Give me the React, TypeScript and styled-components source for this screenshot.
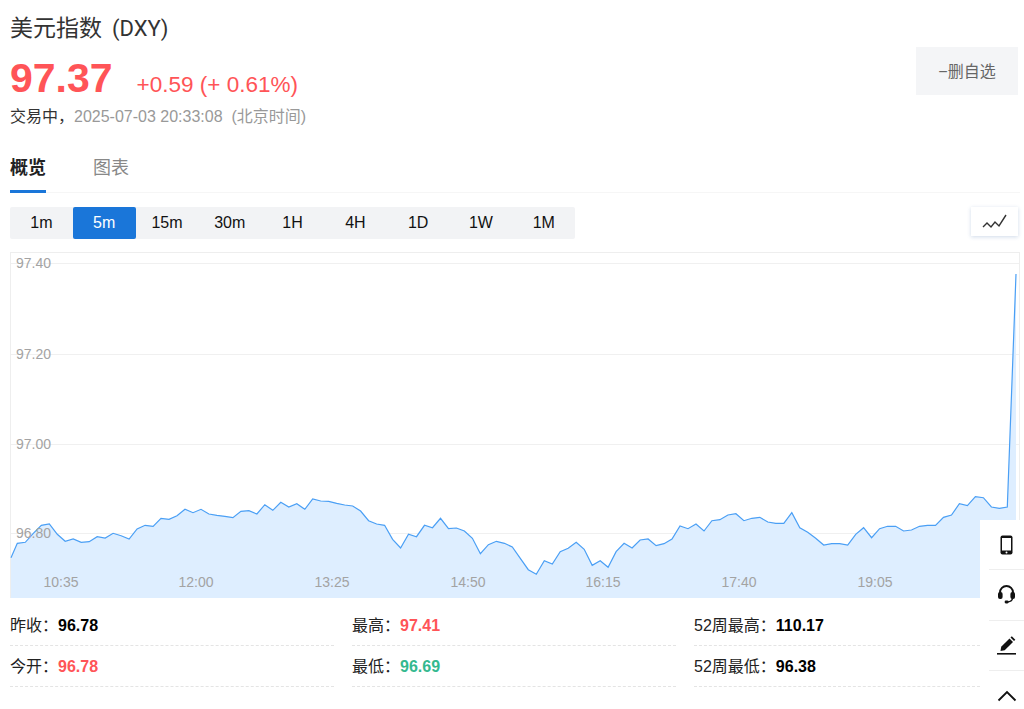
import React from 'react';
import styled, { createGlobalStyle } from 'styled-components';

const RED = '#ff5457';
const GREEN = '#34b98f';
const BLUE = '#1a76d9';

const GlobalStyle = createGlobalStyle`
  html, body {
    margin: 0;
    padding: 0;
    background: #fff;
    overflow: hidden;
  }
  body {
    font-family: "Liberation Sans", "Noto Sans CJK SC", sans-serif;
    color: #000;
  }
`;

// line in thirds of a pixel below y=480, measured off the chart
const LINE = [
  233, 190, 187, 160, 136, 132, 163, 184, 177, 187, 185, 170, 174, 160, 167, 177, 147, 136, 139, 115,
  118, 107, 88, 98, 88, 102, 106, 109, 113, 94, 92, 102, 74, 91, 67, 81, 71, 88, 57, 63,
  64, 70, 75, 78, 93, 122, 132, 136, 178, 204, 163, 170, 136, 143, 115, 146, 144, 153, 175, 221,
  194, 184, 190, 201, 235, 269, 283, 242, 252, 215, 205, 187, 208, 256, 242, 262, 215, 190, 204, 180,
  177, 197, 191, 177, 138, 146, 132, 153, 122, 119, 105, 101, 122, 115, 112, 126, 130, 130, 98, 143,
  157, 175, 195, 191, 191, 195, 163, 143, 173, 146, 139, 139, 153, 150, 139, 136, 136, 112, 105, 71,
  77, 50, 53, 81, 85, 81,
];

const points = LINE.map((v, i) => {
  const x = i === 0 ? 11 : 17.33 + (i - 1) * 7.984;
  return `${x.toFixed(1)},${(480 + v / 3).toFixed(1)}`;
});
points.push('1016,274');
const linePath = points.join(' ');
const areaPath = `11,598 ${linePath} 1016,598`;

const PERIODS = ['1m', '5m', '15m', '30m', '1H', '4H', '1D', '1W', '1M'];
const Y_LABELS = [
  { label: '97.40', y: 263 },
  { label: '97.20', y: 354 },
  { label: '97.00', y: 444 },
  { label: '96.80', y: 533 },
];
const X_LABELS = [
  { label: '10:35', x: 61 },
  { label: '12:00', x: 196 },
  { label: '13:25', x: 332 },
  { label: '14:50', x: 468 },
  { label: '16:15', x: 603 },
  { label: '17:40', x: 739 },
  { label: '19:05', x: 875 },
];
const STATS = [
  [
    { name: '昨收', value: '96.78' },
    { name: '今开', value: '96.78', color: RED },
  ],
  [
    { name: '最高', value: '97.41', color: RED },
    { name: '最低', value: '96.69', color: GREEN },
  ],
  [
    { name: '52周最高', value: '110.17' },
    { name: '52周最低', value: '96.38' },
  ],
];

export default function App() {
  return (
    <Page>
      <GlobalStyle />
      <Header>
        <div>
          <Title>
            美元指数<Symbol>(DXY)</Symbol>
          </Title>
          <PriceRow>
            <Price>97.37</Price>
            <Change>+0.59 (+ 0.61%)</Change>
          </PriceRow>
          <Status>
            交易中，<StatusTime>2025-07-03 20:33:08&nbsp;&nbsp;(北京时间)</StatusTime>
          </Status>
        </div>
        <WatchButton>−删自选</WatchButton>
      </Header>

      <Tabs>
        <Tab $active>概览</Tab>
        <Tab>图表</Tab>
      </Tabs>

      <Toolbar>
        <Periods>
          {PERIODS.map((p) => (
            <Period key={p} $active={p === '5m'}>
              {p}
            </Period>
          ))}
        </Periods>
        <ChartToggle>
          <svg width="26" height="18" viewBox="0 0 26 18" fill="none" stroke="#333" strokeWidth="1.4">
            <polyline points="1,14 5,10 9,14 13,9 17,13 24,2" />
          </svg>
        </ChartToggle>
      </Toolbar>

      <ChartBox>
        <svg width="1010" height="346" viewBox="10 252 1010 346" style={{ display: 'block' }}>
          {Y_LABELS.map((l) => (
            <line key={l.y} x1="11" x2="1019" y1={l.y + 0.5} y2={l.y + 0.5} stroke="#f0f0f0" />
          ))}
          <polygon points={areaPath} fill="#deeeff" />
          <polyline points={linePath} fill="none" stroke="#4a9ff5" strokeWidth="1.2" />
          {Y_LABELS.map((l) => (
            <AxisText key={l.label} x="16" y={l.y + 5}>
              {l.label}
            </AxisText>
          ))}
          {X_LABELS.map((l) => (
            <AxisText key={l.label} x={l.x} y="587" textAnchor="middle">
              {l.label}
            </AxisText>
          ))}
        </svg>
      </ChartBox>

      <Stats>
        {STATS.map((col, i) => (
          <StatColumn key={i}>
            {col.map((s) => (
              <StatRow key={s.name}>
                {s.name}：<StatValue $color={s.color}>{s.value}</StatValue>
              </StatRow>
            ))}
          </StatColumn>
        ))}
      </Stats>

      <SideBar>
        <SideItem>
          <svg width="13" height="20" viewBox="0 0 13 20">
            <rect x="0.5" y="0.5" width="12" height="19" rx="2" fill="#111" />
            <rect x="2" y="3" width="9" height="12.5" fill="#fff" />
            <circle cx="6.5" cy="17.5" r="1" fill="#fff" />
          </svg>
        </SideItem>
        <SideItem>
          <svg width="17" height="19" viewBox="0 0 17 19" fill="none">
            <path d="M2 10V7.5a6.5 6.5 0 0 1 13 0V10" stroke="#111" strokeWidth="2" />
            <rect x="0" y="7" width="4.6" height="7" rx="2" fill="#111" />
            <rect x="12.4" y="7" width="4.6" height="7" rx="2" fill="#111" />
            <path d="M14.5 13c0 2.5-2 3.6-5 4" stroke="#111" strokeWidth="1.4" />
            <rect x="6.6" y="15.6" width="4" height="2.8" rx="1.3" fill="#111" />
          </svg>
        </SideItem>
        <SideItem>
          <svg width="20" height="19" viewBox="0 0 20 19">
            <path d="M3.5 15 4.2 10.8 12.5 2.5 16 6 7.7 14.3Z" fill="#111" />
            <path d="M13.5 1.5 14.8 0.2 18.3 3.7 17 5Z" fill="#111" />
            <rect x="0" y="17" width="19" height="1.6" fill="#111" />
          </svg>
        </SideItem>
        <SideItem>
          <svg width="20" height="12" viewBox="0 0 20 12" fill="none" stroke="#111" strokeWidth="1.8">
            <polyline points="1.5,10.5 10,2 18.5,10.5" />
          </svg>
        </SideItem>
      </SideBar>
    </Page>
  );
}

const Page = styled.div`
  position: relative;
  width: 1024px;
  height: 709px;
  overflow: hidden;
`;

const Header = styled.header`
  display: flex;
  justify-content: space-between;
  align-items: flex-start;
  padding: 14px 6px 0 10px;
`;

const Title = styled.h1`
  margin: 0;
  font-size: 23px;
  font-weight: 400;
  line-height: 28px;
  color: #333;
`;

const Symbol = styled.span`
  margin-left: 10px;
  font-family: Roboto, sans-serif;
  font-size: 22px;
`;

const PriceRow = styled.div`
  display: flex;
  align-items: baseline;
  margin-top: 11px;
  color: ${RED};
`;

const Price = styled.span`
  font-size: 41px;
  font-weight: 700;
  line-height: 48px;
`;

const Change = styled.span`
  margin-left: 24px;
  font-size: 22.5px;
`;

const Status = styled.div`
  margin-top: 5px;
  font-size: 16px;
  line-height: 20px;
  color: #333;
`;

const StatusTime = styled.span`
  color: #999;
`;

const WatchButton = styled.button`
  width: 102px;
  height: 48px;
  margin-top: 33px;
  border: 0;
  background: #f4f5f7;
  font: inherit;
  font-size: 16px;
  color: #666;
  padding: 0 0 2px;
`;

const Tabs = styled.nav`
  display: flex;
  gap: 47px;
  margin: 29px 4px 0 10px;
  border-bottom: 1px solid #f6f6f6;
`;

const Tab = styled.a<{ $active?: boolean }>`
  padding-bottom: 10px;
  font-size: 18px;
  line-height: 24px;
  font-weight: ${(p) => (p.$active ? 700 : 400)};
  color: ${(p) => (p.$active ? '#222' : '#888')};
  border-bottom: 3px solid ${(p) => (p.$active ? BLUE : 'transparent')};
  margin-bottom: -1px;
`;

const Toolbar = styled.div`
  display: flex;
  justify-content: space-between;
  align-items: flex-start;
  margin: 14px 6px 0 10px;
`;

const Periods = styled.div`
  display: flex;
  background: #f2f3f5;
  border-radius: 2px;
`;

const Period = styled.div<{ $active?: boolean }>`
  width: 62.8px;
  height: 32px;
  line-height: 32px;
  text-align: center;
  font-size: 16px;
  border-radius: 2px;
  color: ${(p) => (p.$active ? '#fff' : '#111')};
  background: ${(p) => (p.$active ? BLUE : 'transparent')};
`;

const ChartToggle = styled.div`
  display: flex;
  align-items: center;
  justify-content: center;
  width: 47px;
  height: 29px;
  background: #fff;
  box-shadow: 0 1px 4px rgba(40, 90, 160, 0.22);
`;

const ChartBox = styled.div`
  width: 1010px;
  height: 346px;
  margin: 13px 0 0 10px;
  box-shadow: inset 0 0 0 1px #eee;
`;

const AxisText = styled.text`
  font-size: 14px;
  fill: #a3a3a3;
`;

const Stats = styled.section`
  display: grid;
  grid-template-columns: 324px 324px 286px;
  column-gap: 18px;
  margin: 7px 0 0 10px;
`;

const StatColumn = styled.div`
  display: flex;
  flex-direction: column;
`;

const StatRow = styled.div`
  height: 40px;
  line-height: 41px;
  font-size: 16px;
  color: #222;
  border-bottom: 1px dashed #e4e4e4;
`;

const StatValue = styled.b<{ $color?: string }>`
  color: ${(p) => p.$color || '#000'};
`;

const SideBar = styled.aside`
  position: absolute;
  top: 520px;
  right: 0;
  width: 44px;
  height: 189px;
  background: #fff;
  padding-left: 9px;
  box-sizing: border-box;
`;

const SideItem = styled.div`
  display: flex;
  align-items: center;
  justify-content: center;
  height: 50.3px;
  box-sizing: border-box;
  border-bottom: 1px solid #eee;
  &:last-child {
    border-bottom: 0;
  }
`;
